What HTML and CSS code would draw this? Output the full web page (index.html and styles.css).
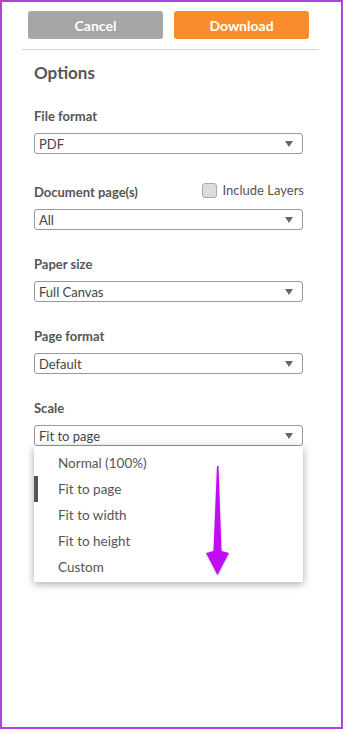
FILE: index.html
```html
<!DOCTYPE html>
<html lang="en">

<head>
  <meta charset="UTF-8">
  <meta name="viewport" content="width=device-width, initial-scale=1.0">
  <title>Download options</title>
  <link rel="stylesheet" href="styles.css">
</head>

<body>
  <div class="frame">
    <div class="actions">
      <button class="btn cancel">Cancel</button>
      <button class="btn download">Download</button>
    </div>
    <hr class="divider">

    <div class="options">
      <h2 class="title">Options</h2>

      <div class="field">
        <p class="label">File format</p>
        <div class="select"><span>PDF</span><i class="caret"></i></div>
      </div>

      <div class="field">
        <div class="label-row">
          <p class="label">Document page(s)</p>
          <label class="check"><span class="box"></span>Include Layers</label>
        </div>
        <div class="select"><span>All</span><i class="caret"></i></div>
      </div>

      <div class="field">
        <p class="label">Paper size</p>
        <div class="select"><span>Full Canvas</span><i class="caret"></i></div>
      </div>

      <div class="field">
        <p class="label">Page format</p>
        <div class="select"><span>Default</span><i class="caret"></i></div>
      </div>

      <div class="field open">
        <p class="label">Scale</p>
        <div class="select"><span>Fit to page</span><i class="caret"></i></div>
        <ul class="menu">
          <li>Normal (100%)</li>
          <li class="active">Fit to page</li>
          <li>Fit to width</li>
          <li>Fit to height</li>
          <li>Custom</li>
        </ul>
      </div>
    </div>
  </div>

  <!-- annotation arrow -->
  <svg class="arrow" width="36" height="120" viewBox="0 0 36 120">
    <path d="M17 6 L18.5 6 L21.5 91 L29 93 L17.5 115 L6 93 L13.5 91 Z" fill="#c20cf6"/>
  </svg>
</body>

</html>
```

FILE: styles.css
```css
* {
  box-sizing: border-box;
}

:root {
  --text: #555;
  --field-text: #444;
  --border: #999;
}

body {
  margin: 0;
  position: relative;
  font-family: Lato, 'Open Sans', sans-serif;
  color: var(--text);
  background: #fff;
}

.frame {
  height: 729px;
  border: 2px solid #b140dc;
}

.actions {
  display: flex;
  gap: 11px;
  padding: 9px 0 0 26px;
}

.btn {
  width: 135px;
  height: 28px;
  border: none;
  border-radius: 3px;
  color: #fff;
  font-family: inherit;
  font-size: 14px;
  font-weight: 700;
  padding: 0;
}

.cancel {
  background: #a6a6a6;
}

.download {
  background: #f98d2b;
}

.divider {
  margin: 10px 22px 0 20px;
  border: none;
  border-top: 1px solid #d4d4d4;
  height: 0;
}

.options {
  padding: 0 38px 0 32px;
}

.title {
  margin: 13px 0 0;
  font-size: 17px;
  line-height: 20px;
  font-weight: 700;
}

.field {
  margin-top: 26px;
  position: relative;
}

.title + .field {
  margin-top: 25px;
}

.label {
  margin: 0 0 9px;
  font-size: 13px;
  line-height: 16px;
  font-weight: 700;
}

.label-row {
  display: flex;
  justify-content: space-between;
  height: 20px;
  margin-bottom: 9px;
}

.label-row .label {
  margin: 4px 0 0;
}

.check {
  display: flex;
  align-items: center;
  gap: 6px;
  margin-top: 2px;
  height: 16px;
  font-size: 13px;
  margin-right: -1px;
}

.box {
  width: 15px;
  height: 15px;
  border: 1px solid #aaa;
  border-radius: 3px;
  background: #dcdcdc;
}

.select {
  display: flex;
  align-items: center;
  justify-content: space-between;
  height: 21px;
  border: 1px solid var(--border);
  border-radius: 3px;
  padding: 0 9px 0 4px;
  font-size: 13px;
  color: var(--field-text);
}

.caret {
  width: 0;
  height: 0;
  border-left: 4px solid transparent;
  border-right: 4px solid transparent;
  border-top: 6px solid #666;
}

.menu {
  position: absolute;
  top: 46px;
  left: 0;
  right: 0;
  list-style: none;
  margin: 0;
  padding: 4px 0 2px;
  background: #fff;
  box-shadow: 0 2px 8px rgba(0, 0, 0, 0.35);
}

.menu li {
  height: 26px;
  line-height: 26px;
  padding-left: 24px;
  font-size: 13.5px;
  color: var(--text);
}

.menu .active {
  border-left: 4px solid #555;
  padding-left: 20px;
}

.arrow {
  position: absolute;
  left: 200px;
  top: 460px;
  filter: drop-shadow(0 1px 1px rgba(0, 0, 0, 0.25));
}
```
